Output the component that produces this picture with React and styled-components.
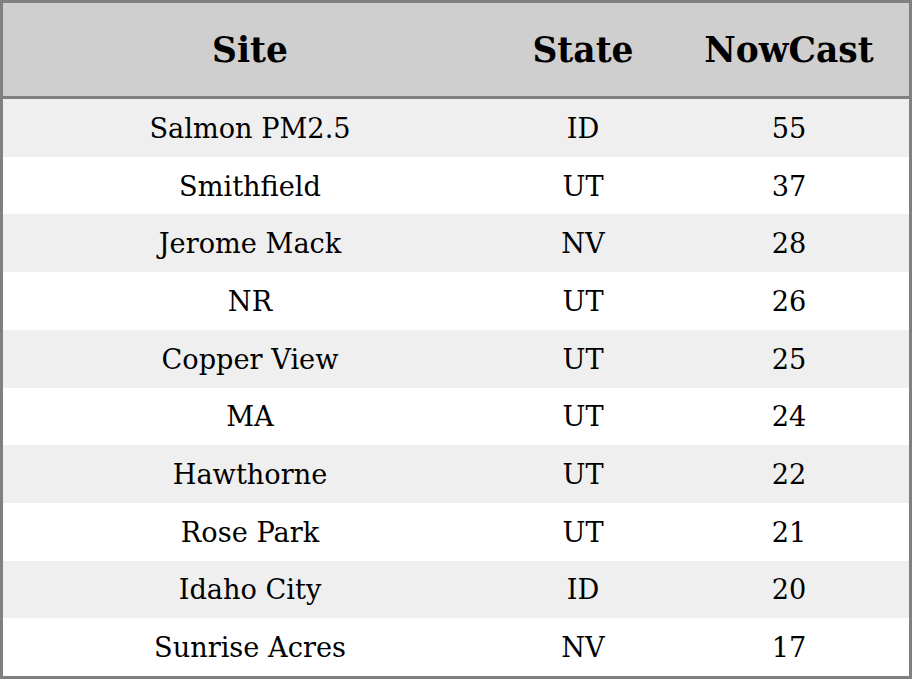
import React from "react";
import styled, { createGlobalStyle } from "styled-components";

const Global = createGlobalStyle`
    body {
        margin: 0;
        background: #ffffff;
        font-family: "DejaVu Serif", serif;
    }
`;

const Table = styled.div`
    width: 912px;
    height: 679px;
    box-sizing: border-box;
    border: 3px solid #808080;
    display: grid;
    grid-template-columns: 494px 172px 240px;
    grid-template-rows: 96px repeat(10, 1fr);
    color: #000;
`;

const Head = styled.div`
    background: #cfcfcf;
    border-bottom: 3px solid #808080;
    display: flex;
    align-items: center;
    justify-content: center;
    font-weight: bold;
    font-size: 34.5px;
    padding-top: 1px;
`;

const Cell = styled.div`
    background: ${props => (props.odd ? "#efefef" : "#ffffff")};
    display: flex;
    align-items: center;
    justify-content: center;
    font-size: 27.2px;
    padding-top: 1px;
`;

const rows = [
    ["Salmon PM2.5", "ID", "55"],
    ["Smithfield", "UT", "37"],
    ["Jerome Mack", "NV", "28"],
    ["NR", "UT", "26"],
    ["Copper View", "UT", "25"],
    ["MA", "UT", "24"],
    ["Hawthorne", "UT", "22"],
    ["Rose Park", "UT", "21"],
    ["Idaho City", "ID", "20"],
    ["Sunrise Acres", "NV", "17"],
];

export default function App() {
    return (
        <>
            <Global />
            <Table>
                <Head>Site</Head>
                <Head>State</Head>
                <Head>NowCast</Head>
                {rows.map((row, i) =>
                    row.map((value, j) => (
                        <Cell key={i + "-" + j} odd={i % 2 === 0}>{value}</Cell>
                    ))
                )}
            </Table>
        </>
    );
}
